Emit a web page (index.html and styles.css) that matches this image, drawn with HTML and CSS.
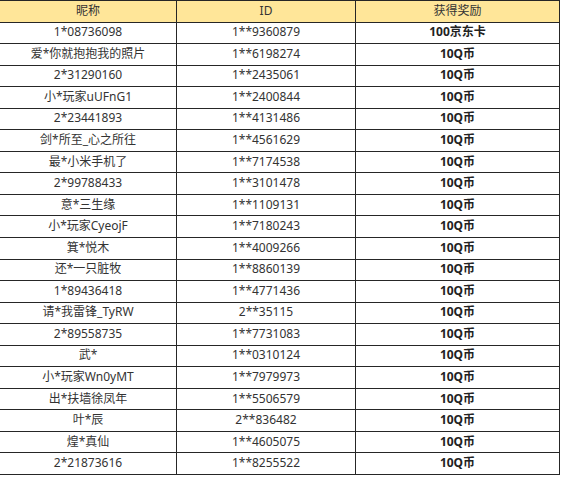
FILE: index.html
```html
<!DOCTYPE html>
<html lang="zh">
<head>
<meta charset="utf-8">
<link rel="stylesheet" href="styles.css">
</head>
<body>
<div class="list">
<div class="cell head">昵称</div><div class="cell head">ID</div><div class="cell head">获得奖励</div>
<div class="cell">1*08736098</div><div class="cell">1**9360879</div><div class="cell prize">100京东卡</div>
<div class="cell">爱*你就抱抱我的照片</div><div class="cell">1**6198274</div><div class="cell prize">10Q币</div>
<div class="cell">2*31290160</div><div class="cell">1**2435061</div><div class="cell prize">10Q币</div>
<div class="cell">小*玩家uUFnG1</div><div class="cell">1**2400844</div><div class="cell prize">10Q币</div>
<div class="cell">2*23441893</div><div class="cell">1**4131486</div><div class="cell prize">10Q币</div>
<div class="cell">剑*所至_心之所往</div><div class="cell">1**4561629</div><div class="cell prize">10Q币</div>
<div class="cell">最*小米手机了</div><div class="cell">1**7174538</div><div class="cell prize">10Q币</div>
<div class="cell">2*99788433</div><div class="cell">1**3101478</div><div class="cell prize">10Q币</div>
<div class="cell">意*三生缘</div><div class="cell">1**1109131</div><div class="cell prize">10Q币</div>
<div class="cell">小*玩家CyeojF</div><div class="cell">1**7180243</div><div class="cell prize">10Q币</div>
<div class="cell">箕*悦木</div><div class="cell">1**4009266</div><div class="cell prize">10Q币</div>
<div class="cell">还*一只脏牧</div><div class="cell">1**8860139</div><div class="cell prize">10Q币</div>
<div class="cell">1*89436418</div><div class="cell">1**4771436</div><div class="cell prize">10Q币</div>
<div class="cell">请*我雷锋_TyRW</div><div class="cell">2**35115</div><div class="cell prize">10Q币</div>
<div class="cell">2*89558735</div><div class="cell">1**7731083</div><div class="cell prize">10Q币</div>
<div class="cell">武*</div><div class="cell">1**0310124</div><div class="cell prize">10Q币</div>
<div class="cell">小*玩家Wn0yMT</div><div class="cell">1**7979973</div><div class="cell prize">10Q币</div>
<div class="cell">出*扶墙徐凤年</div><div class="cell">1**5506579</div><div class="cell prize">10Q币</div>
<div class="cell">叶*辰</div><div class="cell">2**836482</div><div class="cell prize">10Q币</div>
<div class="cell">煌*真仙</div><div class="cell">1**4605075</div><div class="cell prize">10Q币</div>
<div class="cell">2*21873616</div><div class="cell">1**8255522</div><div class="cell prize">10Q币</div>
</div>
</body>
</html>
```
FILE: styles.css
```css
html, body {
  margin: 0;
  padding: 0;
  background: #ffffff;
}
body {
  font-family: "Noto Sans", "Noto Sans CJK SC", sans-serif;
  font-size: 12px;
  color: #333333;
}
.list {
  display: grid;
  grid-template-columns: 177px 179px 204px;
  grid-template-rows: repeat(22, 1fr);
  height: 474px;
  width: 560px;
  border-top: 1px solid #262626;
}
.cell {
  display: flex;
  align-items: center;
  justify-content: center;
  border-bottom: 1px solid #262626;
  border-right: 1px solid #262626;
  white-space: nowrap;
  overflow: hidden;
  line-height: 16px;
  padding-bottom: 1px;
}
.head {
  background: #ffe699;
}
.prize {
  font-weight: bold;
  color: #222222;
}
```
